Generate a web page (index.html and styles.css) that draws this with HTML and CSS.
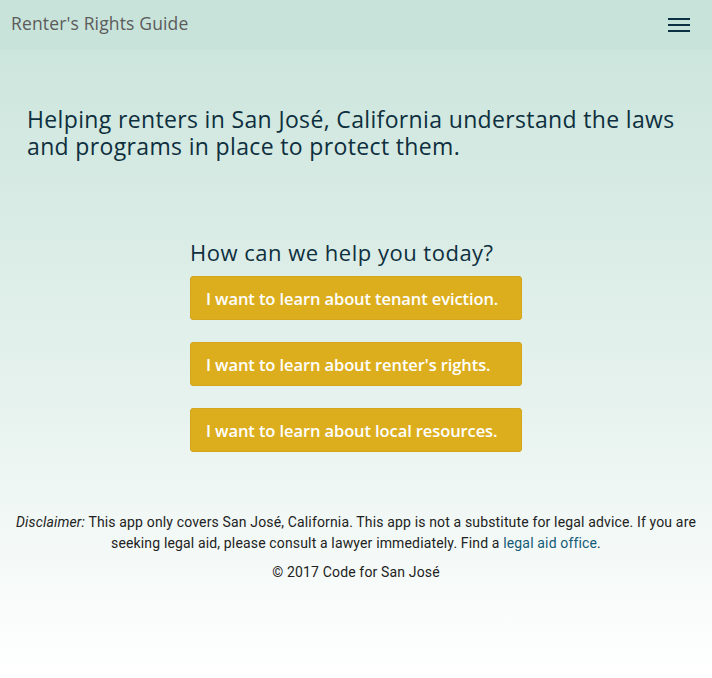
FILE: index.html
```html
<!DOCTYPE html>
<html lang="en">
<head>
<meta charset="utf-8">
<title>Renter's Rights Guide</title>
<link rel="stylesheet" href="styles.css">
</head>
<body>
<div class="page">
  <header class="navbar">
    <span class="brand">Renter's Rights Guide</span>
    <button class="menu" aria-label="Menu">
      <svg width="22" height="16" viewBox="0 0 22 16"><rect x="0" y="1" width="22" height="2" fill="#0c3142"/><rect x="0" y="7" width="22" height="2" fill="#0c3142"/><rect x="0" y="13" width="22" height="2" fill="#0c3142"/></svg>
    </button>
  </header>
  <main class="main">
    <h1 class="lead">Helping renters in San José, California understand the laws and programs in place to protect them.</h1>
    <section class="help">
      <h2 class="help-title">How can we help you today?</h2>
      <a class="btn" href="#">I want to learn about tenant eviction.</a>
      <a class="btn" href="#">I want to learn about renter's rights.</a>
      <a class="btn" href="#">I want to learn about local resources.</a>
    </section>
  </main>
  <footer class="footer">
    <p class="disclaimer"><em>Disclaimer:</em> This app only covers San José, California. This app is not a substitute for legal advice. If you are seeking legal aid, please consult a lawyer immediately. Find a <a href="#">legal aid office</a>.</p>
    <p class="copy">© 2017 Code for San José</p>
  </footer>
</div>
</body>
</html>
```
FILE: styles.css
```css
* { box-sizing: border-box; }
html, body { margin: 0; padding: 0; height: 100%; }
body {
  font-family: "Open Sans", Roboto, sans-serif;
  background: linear-gradient(to bottom, #c9e4db 0%, #e4f1ec 55%, #ffffff 100%);
  color: #0e2f3e;
  min-height: 678px;
}
.page { min-height: 678px; }
.navbar {
  height: 50px;
  background: #c8e3da;
  display: flex;
  align-items: center;
  justify-content: space-between;
  padding: 0 22px 4px 11px;
}
.brand {
  font-size: 17.5px;
  color: #5b5b5b;
  letter-spacing: 0.15px;
}
.menu {
  border: 0;
  background: none;
  padding: 4px 0 0;
  display: flex;
}
.main { padding: 56px 27px 0; }
.lead {
  margin: 0;
  font-size: 23px;
  font-weight: 400;
  line-height: 27px;
  letter-spacing: 0.35px;
}
.help {
  width: 332px;
  margin: 78px auto 0;
  display: flex;
  flex-direction: column;
  gap: 22px;
}
.help-title {
  margin: 0 0 -12px;
  font-size: 22px;
  font-weight: 400;
  line-height: 28px;
  letter-spacing: 0.5px;
}
.btn {
  display: flex;
  align-items: center;
  height: 44px;
  padding: 0 8px 0 15px;
  background: #dcae1e;
  border: 1px solid #d3a61b;
  border-radius: 3px;
  color: #fff;
  font-size: 16.5px;
  font-weight: 600;
  text-decoration: none;
  white-space: nowrap;
  letter-spacing: -0.1px;
}
.footer {
  margin-top: 60px;
  padding: 0 10px;
  text-align: center;
  font-family: Roboto, sans-serif;
  font-size: 14px;
  letter-spacing: 0.15px;
  line-height: 21px;
  color: #222;
}
.disclaimer { margin: 0; }
.disclaimer a { color: #125a77; text-decoration: none; }
.copy { margin: 8px 0 0; }
```
